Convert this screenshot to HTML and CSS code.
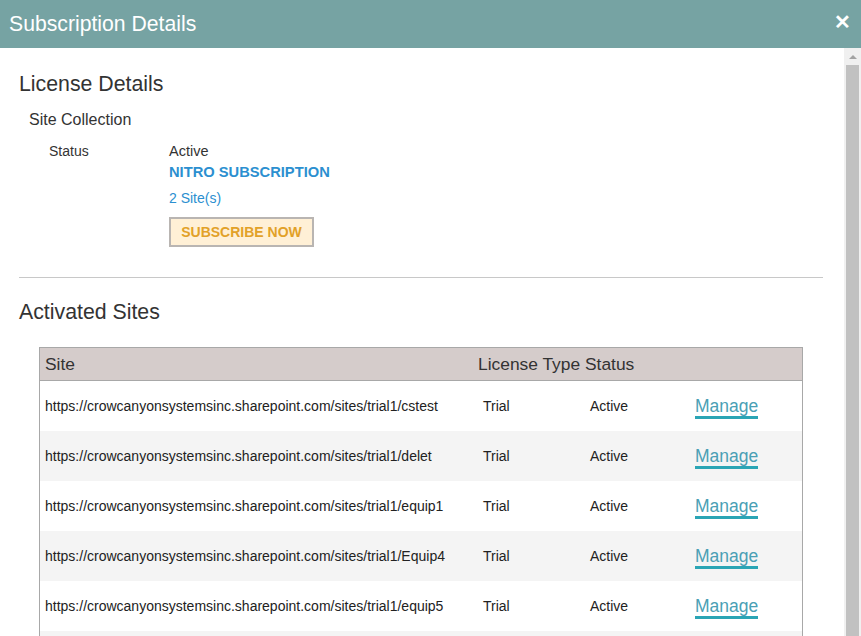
FILE: index.html
```html
<!DOCTYPE html>
<html>
<head>
<meta charset="utf-8">
<link rel="stylesheet" href="styles.css">
</head>
<body>
<div class="dialog">
  <div class="titlebar">
    <span class="title">Subscription Details</span>
    <span class="close">&#10005;</span>
  </div>
  <div class="body">
    <div class="content">
      <h2 class="section">License Details</h2>
      <div class="subsection">Site Collection</div>
      <div class="status-row">
        <div class="label">Status</div>
        <div class="values">
          <div class="active">Active</div>
          <div class="plan">NITRO SUBSCRIPTION</div>
          <div class="sites">2 Site(s)</div>
          <button class="subscribe">SUBSCRIBE NOW</button>
        </div>
      </div>
      <hr class="divider">
      <h2 class="section section2">Activated Sites</h2>
      <div class="table">
        <div class="thead">
          <div class="c-site">Site</div>
          <div class="c-type">License Type Status</div>
        </div>
        <div class="row">
          <div class="c-site">https://crowcanyonsystemsinc.sharepoint.com/sites/trial1/cstest</div>
          <div class="c-trial">Trial</div>
          <div class="c-status">Active</div>
          <div class="c-manage"><a class="manage">Manage</a></div>
        </div>
        <div class="row alt">
          <div class="c-site">https://crowcanyonsystemsinc.sharepoint.com/sites/trial1/delet</div>
          <div class="c-trial">Trial</div>
          <div class="c-status">Active</div>
          <div class="c-manage"><a class="manage">Manage</a></div>
        </div>
        <div class="row">
          <div class="c-site">https://crowcanyonsystemsinc.sharepoint.com/sites/trial1/equip1</div>
          <div class="c-trial">Trial</div>
          <div class="c-status">Active</div>
          <div class="c-manage"><a class="manage">Manage</a></div>
        </div>
        <div class="row alt">
          <div class="c-site">https://crowcanyonsystemsinc.sharepoint.com/sites/trial1/Equip4</div>
          <div class="c-trial">Trial</div>
          <div class="c-status">Active</div>
          <div class="c-manage"><a class="manage">Manage</a></div>
        </div>
        <div class="row">
          <div class="c-site">https://crowcanyonsystemsinc.sharepoint.com/sites/trial1/equip5</div>
          <div class="c-trial">Trial</div>
          <div class="c-status">Active</div>
          <div class="c-manage"><a class="manage">Manage</a></div>
        </div>
        <div class="row alt"></div>
      </div>
    </div>
    <div class="scrollbar">
      <div class="arrow"></div>
      <div class="thumb"></div>
    </div>
  </div>
</div>
</body>
</html>
```
FILE: styles.css
```css
html, body {
  margin: 0;
  padding: 0;
  height: 100%;
  overflow: hidden;
  background: #fff;
  font-family: "Liberation Sans", Arial, sans-serif;
  color: #333;
}
.dialog {
  width: 861px;
  height: 636px;
  display: flex;
  flex-direction: column;
}
.titlebar {
  height: 48px;
  flex: none;
  background: #76a3a3;
  display: flex;
  align-items: center;
  justify-content: space-between;
  padding: 0 10px 0 9px;
}
.title {
  color: #fff;
  font-size: 21.2px;
  margin-top: 0;
}
.close {
  color: #fff;
  font-size: 20px;
  font-weight: bold;
  margin-top: -5px;
}
.body {
  flex: 1;
  display: flex;
  min-height: 0;
}
.content {
  flex: 1;
  padding: 24px 21px 0 19px;
  overflow: hidden;
}
.section {
  margin: 0;
  font-weight: normal;
  font-size: 21.3px;
  line-height: 24px;
  color: #333;
}
.subsection {
  margin: 14px 0 0 10px;
  font-size: 16px;
  line-height: 20px;
}
.status-row {
  display: flex;
  margin: 12px 0 0 30px;
  font-size: 14px;
}
.label {
  width: 120px;
  line-height: 18px;
}
.values {
  display: flex;
  flex-direction: column;
  align-items: flex-start;
}
.active {
  line-height: 18px;
  font-size: 14.5px;
}
.plan {
  margin-top: 3px;
  font-weight: bold;
  font-size: 14.7px;
  color: #2b8fd0;
  line-height: 18px;
}
.sites {
  margin-top: 8px;
  font-size: 14px;
  color: #2b8fd0;
  line-height: 18px;
}
.subscribe {
  margin-top: 10px;
  width: 145px;
  height: 30px;
  background: #fff0d6;
  border: 2px solid #b9b5b2;
  color: #e2a128;
  font-family: "Liberation Sans", Arial, sans-serif;
  font-weight: bold;
  font-size: 14px;
  padding: 0;
}
.divider {
  margin: 30px 0 0 0;
  border: 0;
  border-top: 1px solid #c8c8c8;
}
.section2 {
  margin-top: 22px;
}
.table {
  margin: 23px 20px 0 20px;
  border: 1px solid #a8a8a8;
  border-bottom: 0;
  font-size: 14px;
  color: #222;
}
.thead {
  height: 32px;
  background: #d5cccb;
  border-bottom: 1px solid #a8a8a8;
  display: flex;
  align-items: center;
  font-size: 17.4px;
  color: #333;
}
.thead .c-site {
  width: 433px;
  padding-left: 5px;
}
.row {
  height: 50px;
  display: flex;
  align-items: center;
  background: #fff;
}
.row.alt {
  background: #f4f4f4;
}
.row .c-site {
  width: 438px;
  padding-left: 5px;
}
.c-trial {
  width: 107px;
}
.c-status {
  width: 105px;
}
.c-manage {
  display: flex;
}
.manage {
  font-size: 17.5px;
  color: #4a9fb5;
  border-bottom: 3px solid #2aa5b5;
  line-height: 20px;
  margin-top: 3px;
}
.scrollbar {
  width: 17px;
  flex: none;
  background: #f0f0f0;
  display: flex;
  flex-direction: column;
  align-items: center;
}
.arrow {
  margin-top: 7px;
  width: 0;
  height: 0;
  border-left: 4px solid transparent;
  border-right: 4px solid transparent;
  border-bottom: 4px solid #a3a3a3;
}
.thumb {
  margin-top: 6px;
  width: 13px;
  flex: 1;
  background: #c1c1c1;
}
```
